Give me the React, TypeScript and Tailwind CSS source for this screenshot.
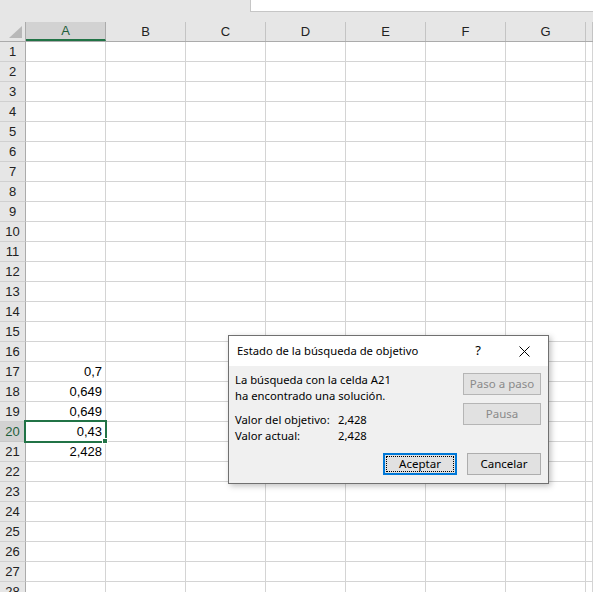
import React from 'react';

const COLS = ['A', 'B', 'C', 'D', 'E', 'F', 'G', 'H'];
const ROWS = Array.from({ length: 28 }, (_, i) => i + 1);
const VALUES: Record<number, string> = {
  17: '0,7',
  18: '0,649',
  19: '0,649',
  20: '0,43',
  21: '2,428',
};

const cellFont = { fontFamily: '"Liberation Sans", Arial, sans-serif' };
const uiFont = { fontFamily: '"Segoe UI", "Noto Sans", sans-serif' };

function Corner() {
  return (
    <div className="w-[26px] shrink-0 h-full border-r border-[#ababab] flex items-end justify-end pr-[3px] pb-[3px]">
      <svg width="13" height="12" viewBox="0 0 13 12">
        <polygon points="13,0 13,12 0,12" fill="#b8b8b8" />
      </svg>
    </div>
  );
}

function HeaderRow() {
  return (
    <div className="flex h-[20px] bg-[#e6e6e6] border-b border-[#ababab]">
      <Corner />
      {COLS.map((c) => {
        const sel = c === 'A';
        return (
          <div
            key={c}
            className={
              sel
                ? 'w-[80px] shrink-0 border-r border-[#ababab] bg-[#d2d2d2] border-b-2 border-b-[#217346] flex items-center justify-center text-[13px] text-[#1e5e3a]'
                : c === 'H'
                ? 'flex-1 border-r border-[#c4c4c4]'
                : 'w-[80px] shrink-0 border-r border-[#c4c4c4] flex items-center justify-center text-[13px] text-[#222]'
            }
          >
            {c === 'H' ? null : c}
          </div>
        );
      })}
    </div>
  );
}

function Row({ n }: { n: number }) {
  const sel = n === 20;
  return (
    <div className="flex h-[20px] shrink-0">
      <div
        className={
          sel
            ? 'w-[26px] shrink-0 bg-[#d2d2d2] border-r border-[#ababab] border-b border-b-[#c8c8c8] flex items-center justify-center text-[13px] text-[#1e5e3a]'
            : 'w-[26px] shrink-0 bg-[#e6e6e6] border-r border-[#ababab] border-b border-b-[#d0d0d0] flex items-center justify-center text-[13px] text-[#222]'
        }
      >
        {n}
      </div>
      {COLS.map((c) => (
        <div
          key={c}
          className={
            c === 'H'
              ? 'flex-1 border-r border-b border-[#d4d4d4]'
              : 'w-[80px] shrink-0 border-r border-b border-[#d4d4d4] flex items-center justify-end pr-[3px] text-[13px] text-black'
          }
        >
          {c === 'A' ? VALUES[n] : null}
        </div>
      ))}
    </div>
  );
}

function Button({
  children,
  disabled,
  primary,
}: {
  children: React.ReactNode;
  disabled?: boolean;
  primary?: boolean;
}) {
  if (primary) {
    return (
      <div className="w-[74px] h-[22px] border-2 border-[#0078d7] bg-[#e1e1e1] p-px">
        <div className="h-full border border-dotted border-black flex items-center justify-center text-[11.5px] text-black">
          {children}
        </div>
      </div>
    );
  }
  return (
    <div
      className={
        disabled
          ? 'w-[78px] h-[22px] border border-[#b5b5b5] bg-[#e1e1e1] flex items-center justify-center text-[11.5px] text-[#8a8a8a]'
          : 'w-[74px] h-[22px] border border-[#adadad] bg-[#e1e1e1] flex items-center justify-center text-[11.5px] text-black'
      }
    >
      {children}
    </div>
  );
}

function GoalSeekDialog() {
  return (
    <div
      className="absolute left-[228px] top-[335px] w-[321px] h-[149px] border border-[#707070] bg-[#f0f0f0] flex flex-col shadow-[2px_2px_6px_rgba(0,0,0,0.25)]"
      style={uiFont}
    >
      <div className="h-[30px] shrink-0 bg-white flex items-center pl-[8px] text-[11.25px] text-black">
        <span className="flex-1">Estado de la búsqueda de objetivo</span>
        <span className="w-[12px] text-center text-[13px] mr-[35px]">?</span>
        <svg width="11" height="11" viewBox="0 0 11 11" className="mr-[18px]">
          <path d="M0.5 0.5L10.5 10.5M10.5 0.5L0.5 10.5" stroke="#000" strokeWidth="1" fill="none" />
        </svg>
      </div>
      <div className="flex-1 flex flex-col pl-[6px] pr-[7px] pb-[8px]">
        <div className="flex justify-between">
          <div className="pt-[6px] text-[11.25px] leading-[16px] text-black">
            <div>La búsqueda con la celda A21</div>
            <div>ha encontrado una solución.</div>
            <div className="mt-[8px] flex">
              <span className="w-[103px]">Valor del objetivo:</span>
              <span>2,428</span>
            </div>
            <div className="flex">
              <span className="w-[103px]">Valor actual:</span>
              <span>2,428</span>
            </div>
          </div>
          <div className="pt-[7px] flex flex-col gap-[8px]">
            <Button disabled>Paso a paso</Button>
            <Button disabled>Pausa</Button>
          </div>
        </div>
        <div className="mt-auto flex justify-end gap-[10px]">
          <Button primary>Aceptar</Button>
          <Button>Cancelar</Button>
        </div>
      </div>
    </div>
  );
}

export default function App() {
  return (
    <div className="relative w-[593px] h-[592px] overflow-hidden bg-white select-none" style={cellFont}>
      <div className="h-[22px] bg-[#e6e6e6] flex">
        <div className="w-[250px] shrink-0" />
        <div className="flex-1 h-[12px] bg-white border-l border-b border-[#c6c6c6]" />
      </div>
      <HeaderRow />
      <div className="flex flex-col">
        {ROWS.map((n) => (
          <Row key={n} n={n} />
        ))}
      </div>

      {/* active cell A20 */}
      <div className="absolute left-[24px] top-[420px] w-[83px] h-[23px] border-2 border-[#217346] pointer-events-none" />
      <div className="absolute left-[102px] top-[438px] w-[6px] h-[6px] bg-[#217346] border border-white pointer-events-none" />

      <GoalSeekDialog />
    </div>
  );
}
